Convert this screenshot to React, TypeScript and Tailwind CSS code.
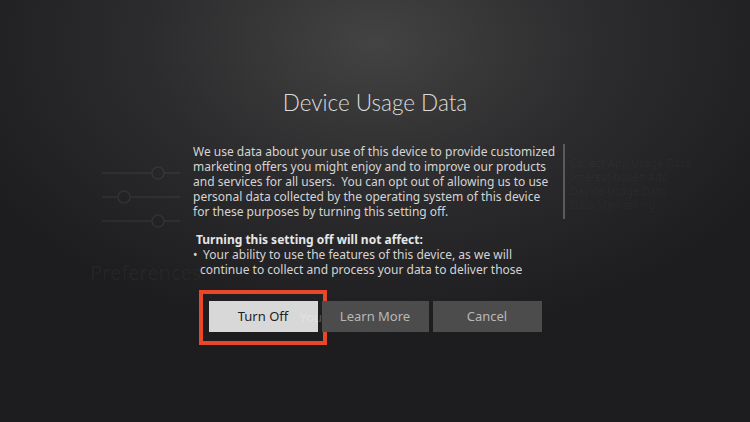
import React from "react";

export default function App() {
  return (
    <div className="relative w-[750px] h-[422px] overflow-hidden bg-[#1d1c1f] bg-[radial-gradient(ellipse_60%_70%_at_50%_10%,#434343_0%,#2c2b2d_50%,#1d1c1f_100%)] font-['Noto_Sans',sans-serif]">
      {/* faint background content behind the dialog */}
      <div className="absolute left-[96px] top-[166px] w-[84px] h-[62px] opacity-[0.06]">
        <svg width="84" height="62" viewBox="0 0 84 62" fill="none" stroke="#ffffff" strokeWidth="1.5">
          <line x1="6" y1="7" x2="84" y2="7" />
          <circle cx="62" cy="7" r="6" fill="#1d1c1f" />
          <line x1="6" y1="31" x2="84" y2="31" />
          <circle cx="28" cy="31" r="6" fill="#1d1c1f" />
          <line x1="6" y1="55" x2="84" y2="55" />
          <circle cx="62" cy="55" r="6" fill="#1d1c1f" />
        </svg>
      </div>
      <div className="absolute left-[90px] top-[258px] text-[20px] text-white/[0.04] whitespace-nowrap">Preferences</div>
      <div className="absolute left-[570px] top-[156px] text-[11px] leading-[14px] text-white/[0.04] whitespace-nowrap">
        <div>Collect App Usage Data</div>
        <div>Interest-based Ads</div>
        <div>Device Usage Data</div>
        <div>Data Monitoring</div>
      </div>

      <div className="relative flex flex-col items-center pt-[88px]">
        <h1 className="text-[22.5px] leading-[30px] font-light text-[#dcdcdc] font-['Lato',sans-serif]">
          Device Usage Data
        </h1>

        <div className="mt-[26px] ml-[8px] flex w-[372px]">
          <div className="flex-1 text-[12px] text-[#d4d4d4] whitespace-nowrap">
            <p className="leading-[15px]">
              We use data about your use of this device to provide customized
              <br />
              marketing offers you might enjoy and to improve our products
              <br />
              and services for all users.&nbsp; You can opt out of allowing us to use
              <br />
              personal data collected by the operating system of this device
              <br />
              for these purposes by turning this setting off.
            </p>
            <p className="mt-[13px] pl-[3px] leading-[15px] font-bold text-[#e6e6e6]">
              Turning this setting off will not affect:
            </p>
            <div className="flex leading-[15px]">
              <span className="w-[7px]">•</span>
              <span>
                &nbsp;Your ability to use the features of this device, as we will
                <br />
                continue to collect and process your data to deliver those
              </span>
            </div>
          </div>
          <div className="mt-[0px] w-[2px] h-[75px] bg-[#5a5a5a]" />
        </div>

        <div className="relative mt-[24px] flex gap-[4px]">
          <div className="absolute left-[-10px] top-[-11px] w-[128px] h-[55px] border-[4px] border-[#e8472a]" />
          <button className="relative w-[109px] h-[31px] bg-[#d8d8d8] text-[13px] text-[#1f1f1f]">
            Turn Off
          </button>
          <span className="absolute left-[91px] top-[7px] text-[13px] text-white/25">You</span>
          <button className="relative z-10 w-[107px] h-[31px] bg-[#4c4c4c] text-[13px] text-[#b8b8b8]">
            Learn More
          </button>
          <button className="w-[109px] h-[31px] bg-[#4c4c4c] text-[13px] text-[#b8b8b8]">
            Cancel
          </button>
        </div>
      </div>
    </div>
  );
}
